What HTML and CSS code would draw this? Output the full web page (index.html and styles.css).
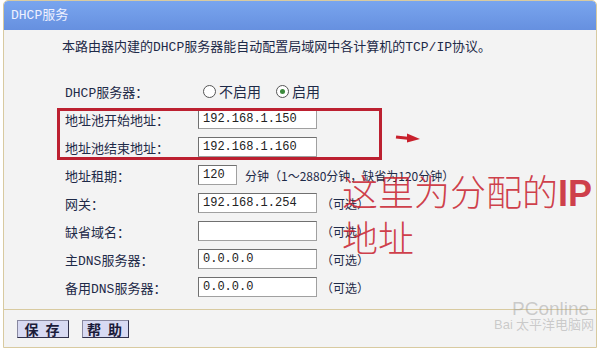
FILE: index.html
```html
<!DOCTYPE html>
<html lang="zh-CN">
<head>
    <meta charset="UTF-8">
    <title>DHCP服务</title>
    <link rel="stylesheet" href="styles.css">
</head>
<body>
    <div class="panel">
        <div class="panel-head">DHCP服务</div>

        <div class="panel-body">
            <p class="intro">本路由器内建的DHCP服务器能自动配置局域网中各计算机的TCP/IP协议。</p>

            <div class="form">
                <div class="row">
                    <span class="label">DHCP服务器</span>
                    <span class="field">
                        <span class="radio"></span><span class="radio-text">不启用</span>
                        <span class="radio checked"></span><span class="radio-text">启用</span>
                    </span>
                </div>
                <div class="row">
                    <span class="label">地址池开始地址</span>
                    <span class="field"><span class="input">192.168.1.150</span></span>
                </div>
                <div class="row">
                    <span class="label">地址池结束地址</span>
                    <span class="field"><span class="input">192.168.1.160</span></span>
                </div>
                <div class="row">
                    <span class="label">地址租期</span>
                    <span class="field">
                        <span class="input short">120</span>
                        <span class="hint">分钟（1～2880分钟，缺省为120分钟）</span>
                    </span>
                </div>
                <div class="row">
                    <span class="label">网关</span>
                    <span class="field"><span class="input">192.168.1.254</span><span class="opt">（可选）</span></span>
                </div>
                <div class="row">
                    <span class="label">缺省域名</span>
                    <span class="field"><span class="input"></span><span class="opt">（可选）</span></span>
                </div>
                <div class="row">
                    <span class="label">主DNS服务器</span>
                    <span class="field"><span class="input">0.0.0.0</span><span class="opt">（可选）</span></span>
                </div>
                <div class="row">
                    <span class="label">备用DNS服务器</span>
                    <span class="field"><span class="input">0.0.0.0</span><span class="opt">（可选）</span></span>
                </div>
            </div>
        </div>

        <div class="panel-foot">
            <button class="btn">保 存</button>
            <button class="btn">帮 助</button>
        </div>

        <!-- 标注 -->
        <div class="mark-box"></div>
        <svg class="mark-arrow" width="26" height="12" viewBox="0 0 26 12">
            <path d="M1 5 L15 6.5" stroke="#c8202c" stroke-width="3" fill="none"/>
            <path d="M12 1.5 L25 7 L12 10.5 Z" fill="#c8202c"/>
        </svg>
        <div class="mark-text">这里为分配的<b>IP</b><br>地址</div>

        <div class="watermark">
            <div class="wm-logo">PConline</div>
            <div class="wm-sub">Bai 太平洋电脑网</div>
        </div>
    </div>
</body>
</html>
```

FILE: styles.css
```css
body {
    margin: 0;
    background: #ffffff;
    font-family: "Liberation Mono", "Noto Sans CJK SC", monospace;
    font-size: 13px;
    color: #1e2a48;
}

.panel {
    position: relative;
    margin: 0 0 0 3px;
    width: 592px;
    border: 1px solid #d8caa0;
    border-radius: 5px 5px 0 0;
    background: #f3f3f3;
    overflow: hidden;
}

.panel-head {
    height: 29px;
    line-height: 29px;
    padding-left: 7px;
    border-radius: 4px 4px 0 0;
    background: linear-gradient(#79a5ee, #6690e0);
    color: #eef0ff;
    font-size: 13px;
}

.panel-body {
    padding: 8px 0 8px 0;
}

.intro {
    margin: 0 0 19px 58px;
    line-height: 20px;
}

.row {
    display: flex;
    align-items: center;
    height: 28px;
}

.label {
    width: 133px;
    padding-left: 61px;
    flex-shrink: 0;
}

.label::after {
    content: "：";
    font-family: "Noto Sans CJK JP", sans-serif;
}

.field {
    display: flex;
    align-items: center;
}

.radio {
    width: 11px;
    height: 11px;
    margin: 0 3px 0 5px;
    border: 1px solid #555;
    border-radius: 50%;
    background: #fff;
    position: relative;
}

.radio.checked::after {
    content: "";
    position: absolute;
    left: 3px;
    top: 3px;
    width: 5px;
    height: 5px;
    border-radius: 50%;
    background: #3c8a3c;
}

.radio-text {
    margin-right: 10px;
    font-size: 14px;
}

.input {
    display: inline-block;
    box-sizing: border-box;
    width: 119px;
    height: 20px;
    line-height: 18px;
    padding-left: 4px;
    border: 1px solid #707070;
    border-right-color: #a0a0a0;
    border-bottom-color: #a0a0a0;
    background: #fff;
    color: #222;
    font-family: "Liberation Mono", monospace;
    font-size: 12px;
}

.input.short {
    width: 39px;
}

.hint {
    margin-left: 8px;
    font-family: "Noto Sans CJK SC", sans-serif;
    font-size: 12px;
}

.opt {
    margin-left: 4px;
    font-family: "Noto Sans CJK SC", sans-serif;
    font-size: 12px;
}

.panel-foot {
    border-top: 1px solid #d8caa0;
    height: 37px;
    display: flex;
    align-items: center;
    gap: 13px;
    padding-left: 13px;
}

.btn {
    width: 52px;
    height: 18px;
    padding: 0;
    border: 1px solid #30304a;
    border-top-color: #8888a0;
    border-left-color: #8888a0;
    background: #d8daf2;
    color: #1c1c3a;
    font-family: "Noto Sans CJK SC", sans-serif;
    font-size: 14px;
    font-weight: bold;
    line-height: 16px;
    letter-spacing: 2px;
}

.btn + .btn {
    width: 47px;
}

.mark-box {
    position: absolute;
    left: 53px;
    top: 107px;
    width: 319px;
    height: 46px;
    border: 3px solid #bc2030;
}

.mark-arrow {
    position: absolute;
    left: 391px;
    top: 131px;
}

.mark-text {
    position: absolute;
    left: 338px;
    top: 168px;
    color: rgba(200, 32, 44, 0.85);
    font-family: "Noto Sans CJK SC", sans-serif;
    font-size: 36px;
    font-weight: 300;
    line-height: 42px;
}

.mark-text b {
    font-family: "Liberation Sans", sans-serif;
    font-weight: bold;
}

.watermark {
    position: absolute;
    left: 490px;
    top: 298px;
    color: rgba(150, 150, 150, 0.45);
    font-family: "Liberation Sans", sans-serif;
    line-height: 1;
}

.wm-logo {
    padding-left: 18px;
    font-size: 19px;
}

.wm-sub {
    font-size: 13px;
    white-space: nowrap;
}
```
